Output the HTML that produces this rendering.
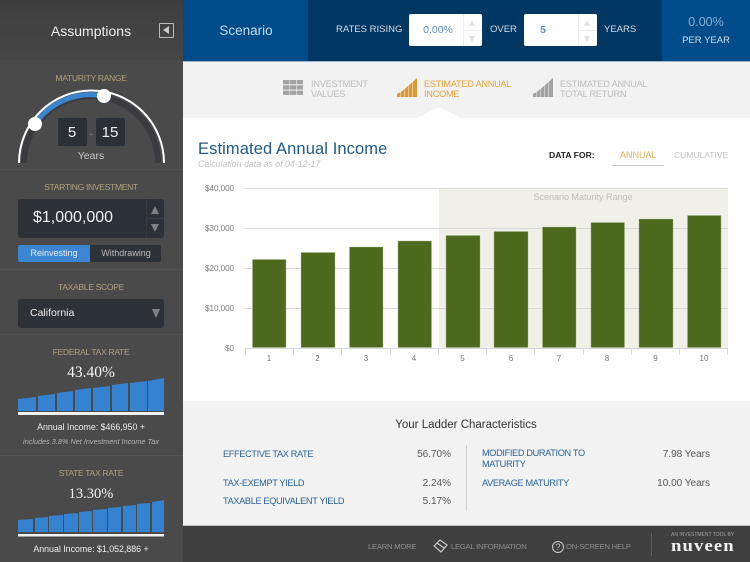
<!DOCTYPE html>
<html><head><meta charset="utf-8">
<style>
html,body{margin:0;padding:0}
body{width:750px;height:562px;overflow:hidden;position:relative;background:#fff;font-family:"Liberation Sans",sans-serif}
.a{position:absolute}
.t{position:absolute;white-space:nowrap;line-height:1}
.c{transform:translateX(-50%)}
.r{transform:translateX(-100%)}
.lab{color:#b0a07a;font-size:8.6px;letter-spacing:-.35px}
.line{position:absolute;height:1px;left:0;width:183px;background:#535354}
.blue{color:#2a6196;font-size:9.2px;letter-spacing:-.35px}
.val{color:#555;font-size:10px}
.ax{font-size:8px;color:#777}
.tk{font-size:8px;color:#777}
.ft{font-size:7.6px;color:#8f8f8f;letter-spacing:-.2px}
.tab{font-size:9.2px;line-height:10px;letter-spacing:-.25px}
</style></head><body>

<!-- sidebar -->
<div class="a" style="left:0;top:0;width:183px;height:562px;background:#4a4a4b"></div>
<div class="a" style="left:0;top:0;width:183px;height:60px;background:linear-gradient(#3e3e3f,#464647)"></div>
<div class="t c" style="left:91px;top:24px;font-size:14px;color:#eee">Assumptions</div>
<div class="a" style="left:159px;top:23px;width:13px;height:13px;border:1px solid #bbb;border-radius:1px"></div>
<div class="a" style="left:163px;top:26px;width:0;height:0;border-right:6px solid #ccc;border-top:4px solid transparent;border-bottom:4px solid transparent"></div>

<div class="t c lab" style="left:91px;top:74px">MATURITY RANGE</div>
<svg class="a" style="left:0;top:80px" width="183" height="90" viewBox="0 80 183 90">
<path d="M24 163A67 67 0 0 1 158 163" fill="none" stroke="#3a3b3e" stroke-width="6"/>
<path d="M19 163A72.500 72.500 0 0 1 164 163" fill="none" stroke="#fff" stroke-width="2"/>
<path d="M35 124A68 68 0 0 1 104 96" fill="none" stroke="#3a85d0" stroke-width="5"/>
<circle cx="35" cy="124" r="7" fill="#fff"/>
<circle cx="104" cy="96" r="7" fill="#fff"/>
</svg>
<div class="a" style="left:58px;top:118px;width:29px;height:28px;background:#2b2f36;border-radius:2px"></div>
<div class="a" style="left:96px;top:118px;width:29px;height:28px;background:#2b2f36;border-radius:2px"></div>
<div class="t c" style="left:72px;top:125px;font-size:15px;color:#eee">5</div>
<div class="t c" style="left:110px;top:125px;font-size:15px;color:#eee">15</div>
<div class="t c" style="left:91px;top:130px;font-size:9px;color:#888">-</div>
<div class="t c" style="left:91px;top:151px;font-size:10.5px;color:#c8c8c8">Years</div>
<div class="line" style="top:169px"></div>

<div class="t c lab" style="left:91px;top:183px">STARTING INVESTMENT</div>
<div class="a" style="left:18px;top:199px;width:146px;height:39px;background:#2d3138;border-radius:3px"></div>
<div class="a" style="left:146px;top:199px;width:1px;height:39px;background:#373b42"></div>
<div class="a" style="left:147px;top:218px;width:17px;height:1px;background:#3b3f46"></div>
<div class="t" style="left:33px;top:210px;font-size:16px;color:#f2f2f2">$1,000,000</div>
<div class="a" style="left:151px;top:206px;width:0;height:0;border-bottom:8px solid #7f8185;border-left:4.5px solid transparent;border-right:4.5px solid transparent"></div>
<div class="a" style="left:151px;top:224px;width:0;height:0;border-top:8px solid #7f8185;border-left:4.5px solid transparent;border-right:4.5px solid transparent"></div>
<div class="a" style="left:18px;top:245px;width:143px;height:17px;background:#2d3138;border-radius:2px"></div>
<div class="a" style="left:18px;top:245px;width:72px;height:17px;background:#3b86d2;border-radius:2px 0 0 2px"></div>
<div class="t c" style="left:54px;top:249px;font-size:9px;color:#e8eef5">Reinvesting</div>
<div class="t c" style="left:126px;top:249px;font-size:9px;color:#b9b9b9">Withdrawing</div>
<div class="line" style="top:269px"></div>

<div class="t c lab" style="left:91px;top:283px">TAXABLE SCOPE</div>
<div class="a" style="left:18px;top:299px;width:146px;height:29px;background:#2d3138;border-radius:3px"></div>
<div class="t" style="left:30px;top:308px;font-size:10.5px;color:#eee">California</div>
<div class="a" style="left:152px;top:309px;width:0;height:0;border-top:9px solid #7f8185;border-left:4px solid transparent;border-right:4px solid transparent"></div>
<div class="line" style="top:334px"></div>

<div class="t c lab" style="left:91px;top:348px">FEDERAL TAX RATE</div>
<div class="t c" style="left:91px;top:365px;font-size:15.5px;color:#f4f4f4;font-family:'Liberation Serif',serif">43.40%</div>
<svg class="a" style="left:0;top:370px" width="183" height="50" viewBox="0 370 183 50">
<g fill="#3582d0">
<polygon points="18,399 36,397 36,411 18,411"/>
<polygon points="38,396 55,394 55,411 38,411"/>
<polygon points="57,393 73,391 73,411 57,411"/>
<polygon points="75,390 91,388 91,411 75,411"/>
<polygon points="93,388 110,386 110,411 93,411"/>
<polygon points="112,385 128,383 128,411 112,411"/>
<polygon points="130,383 147,381 147,411 130,411"/>
<polygon points="148,381 164,378 164,411 148,411"/>
</g>
<rect x="18" y="412" width="146" height="3" fill="#f2f2f2"/>
</svg>
<div class="t c" style="left:91px;top:423px;font-size:8.8px;color:#eee">Annual Income: $466,950 +</div>
<div class="t c" style="left:91px;top:438px;font-size:7.3px;font-style:italic;color:#b4b4b4">includes 3.8% Net Investment Income Tax</div>
<div class="line" style="top:455px"></div>

<div class="t c lab" style="left:91px;top:469px">STATE TAX RATE</div>
<div class="t c" style="left:91px;top:487px;font-size:14.5px;color:#f4f4f4;font-family:'Liberation Serif',serif">13.30%</div>
<svg class="a" style="left:0;top:495px" width="183" height="45" viewBox="0 495 183 45">
<g fill="#3582d0">
<polygon points="18,520 33,519 33,532 18,532"/>
<polygon points="35,518 48,517 48,532 35,532"/>
<polygon points="49,516 63,515 63,532 49,532"/>
<polygon points="64,514 78,513 78,532 64,532"/>
<polygon points="79,512 92,511 92,532 79,532"/>
<polygon points="93,510 107,509 107,532 93,532"/>
<polygon points="108,508 121,507 121,532 108,532"/>
<polygon points="123,506 136,505 136,532 123,532"/>
<polygon points="137,504 150,503 150,532 137,532"/>
<polygon points="152,502 164,500 164,532 152,532"/>
</g>
<rect x="18" y="534" width="146" height="2.500" fill="#f2f2f2"/>
</svg>
<div class="t c" style="left:91px;top:545px;font-size:8.8px;color:#eee">Annual Income: $1,052,886 +</div>

<!-- top bar -->
<div class="a" style="left:183px;top:0;width:567px;height:61px;background:#003763"></div>
<div class="a" style="left:183px;top:0;width:125px;height:61px;background:#004b8a"></div>
<div class="a" style="left:662px;top:0;width:88px;height:61px;background:#004b8a"></div>
<div class="a" style="left:183px;top:61px;width:567px;height:1px;background:#9bb4cc"></div>
<div class="t c" style="left:246px;top:24px;font-size:13.5px;color:#c6dcef">Scenario</div>
<div class="t" style="left:336px;top:24.500px;font-size:9.5px;color:#d5dde5">RATES RISING</div>
<div class="a" style="left:409px;top:14px;width:73px;height:32px;background:#fff;border-radius:2px"></div>
<div class="a" style="left:463px;top:14px;width:1px;height:32px;background:#eee"></div>
<div class="a" style="left:464px;top:30px;width:18px;height:1px;background:#eee"></div>
<div class="a" style="left:469px;top:20px;width:0;height:0;border-bottom:6px solid #e2e2e2;border-left:3.5px solid transparent;border-right:3.5px solid transparent"></div>
<div class="a" style="left:469px;top:36px;width:0;height:0;border-top:6px solid #e2e2e2;border-left:3.5px solid transparent;border-right:3.5px solid transparent"></div>
<div class="t c" style="left:438px;top:25px;font-size:10.5px;color:#5f8fc2">0.00%</div>
<div class="t" style="left:490px;top:24.500px;font-size:9.5px;color:#d5dde5">OVER</div>
<div class="a" style="left:524px;top:14px;width:73px;height:32px;background:#fff;border-radius:2px"></div>
<div class="a" style="left:578px;top:14px;width:1px;height:32px;background:#eee"></div>
<div class="a" style="left:579px;top:30px;width:18px;height:1px;background:#eee"></div>
<div class="a" style="left:584px;top:20px;width:0;height:0;border-bottom:6px solid #e2e2e2;border-left:3.5px solid transparent;border-right:3.5px solid transparent"></div>
<div class="a" style="left:584px;top:36px;width:0;height:0;border-top:6px solid #e2e2e2;border-left:3.5px solid transparent;border-right:3.5px solid transparent"></div>
<div class="t c" style="left:543px;top:25px;font-size:10.5px;font-weight:bold;color:#5f8fc2">5</div>
<div class="t" style="left:604px;top:24.500px;font-size:9.5px;color:#d5dde5">YEARS</div>
<div class="t c" style="left:706px;top:16px;font-size:12.5px;color:#7fb2de">0.00%</div>
<div class="t c" style="left:706px;top:35.500px;font-size:9.5px;color:#d5dde5">PER YEAR</div>

<!-- tabs -->
<div class="a" style="left:183px;top:62px;width:567px;height:56px;background:#f2f2f2"></div>
<svg class="a" style="left:415px;top:105px" width="50" height="14"><polygon points="2,13 24,2 46,13" fill="#fff"/></svg>
<svg class="a" style="left:283px;top:80px" width="20" height="15"><g fill="#a3a3a3">
<rect x="0" y="0" width="6.300" height="4.300"/><rect x="6.800" y="0" width="6.300" height="4.300"/><rect x="13.700" y="0" width="6.300" height="4.300"/>
<rect x="0" y="5.300" width="6.300" height="4.300"/><rect x="6.800" y="5.300" width="6.300" height="4.300"/><rect x="13.700" y="5.300" width="6.300" height="4.300"/>
<rect x="0" y="10.600" width="6.300" height="4.300"/><rect x="6.800" y="10.600" width="6.300" height="4.300"/><rect x="13.700" y="10.600" width="6.300" height="4.300"/></g></svg>
<div class="t tab" style="left:311px;top:79px;color:#bdbdbd">INVESTMENT<br>VALUES</div>
<svg class="a" style="left:397px;top:78px" width="20" height="20"><g fill="#dd9a34">
<polygon points="0,16 3.500,14 3.500,19 0,19"/><polygon points="4,13.700 7.500,11 7.500,19 4,19"/><polygon points="8,10.500 11.500,7.500 11.500,19 8,19"/><polygon points="12,7 15.500,4 15.500,19 12,19"/><polygon points="16,3.500 20,0 20,19 16,19"/></g></svg>
<div class="t tab" style="left:424px;top:79px;color:#e1a341">ESTIMATED ANNUAL<br>INCOME</div>
<svg class="a" style="left:533px;top:78px" width="20" height="20"><g fill="#a3a3a3">
<polygon points="0,16 3.500,14 3.500,19 0,19"/><polygon points="4,13.700 7.500,11 7.500,19 4,19"/><polygon points="8,10.500 11.500,7.500 11.500,19 8,19"/><polygon points="12,7 15.500,4 15.500,19 12,19"/><polygon points="16,3.500 20,0 20,19 16,19"/></g></svg>
<div class="t tab" style="left:560px;top:79px;color:#bdbdbd">ESTIMATED ANNUAL<br>TOTAL RETURN</div>

<!-- chart header -->
<div class="t" style="left:198px;top:141px;font-size:16.5px;color:#1f5a88;letter-spacing:.1px">Estimated Annual Income</div>
<div class="t" style="left:198px;top:160px;font-size:8.8px;font-style:italic;color:#c0c0c0">Calculation data as of 04-12-17</div>
<div class="t" style="left:549px;top:151px;font-size:8.6px;font-weight:bold;color:#222">DATA FOR:</div>
<div class="t" style="left:620px;top:151px;font-size:9px;color:#e5ae55">ANNUAL</div>
<div class="a" style="left:612px;top:165px;width:52px;height:1px;background:#c9c9c9"></div>
<div class="t" style="left:674px;top:151px;font-size:8.5px;color:#c0c0c0">CUMULATIVE</div>

<!-- chart -->
<svg class="a" style="left:183px;top:180px" width="567" height="190" viewBox="183 180 567 190">
<rect x="439" y="188" width="289" height="160" fill="#f0f0e8"/>
<g stroke="#d8d8d8" stroke-width="1">
<path d="M245 188.500H728M245 228.500H728M245 268.500H728M245 308.500H728"/>
</g>
<g stroke="#d6d6e2" stroke-width="1">
<path d="M245 348.500H728M245.500 348V355M293.500 348V355M341.500 348V355M390.500 348V355M438.500 348V355M486.500 348V355M534.500 348V355M583.500 348V355M631.500 348V355M679.500 348V355M727.500 348V355"/>
</g>
<g fill="#4c691e" stroke="#a7b58b" stroke-width=".4">
<rect x="252.500" y="259.500" width="33.500" height="88"/>
<rect x="301" y="252.500" width="34" height="95"/>
<rect x="349.500" y="247" width="33.500" height="100.500"/>
<rect x="398" y="241" width="33.500" height="106.500"/>
<rect x="446" y="235.500" width="34" height="112"/>
<rect x="494" y="231.500" width="34" height="116"/>
<rect x="542.500" y="227" width="33.500" height="120.500"/>
<rect x="591" y="222.500" width="33.500" height="125"/>
<rect x="639" y="219" width="34" height="128.500"/>
<rect x="687.500" y="215.500" width="33.500" height="132"/>
</g>
</svg>
<div class="t c" style="left:583px;top:192.500px;font-size:9px;color:#bdbdb5">Scenario Maturity Range</div>
<div class="t r ax" style="left:234px;top:185px">$40,000</div>
<div class="t r ax" style="left:234px;top:225px">$30,000</div>
<div class="t r ax" style="left:234px;top:265px">$20,000</div>
<div class="t r ax" style="left:234px;top:305px">$10,000</div>
<div class="t r ax" style="left:234px;top:345px">$0</div>
<div class="t c tk" style="left:269px;top:355px">1</div>
<div class="t c tk" style="left:317.500px;top:355px">2</div>
<div class="t c tk" style="left:366px;top:355px">3</div>
<div class="t c tk" style="left:414px;top:355px">4</div>
<div class="t c tk" style="left:462.500px;top:355px">5</div>
<div class="t c tk" style="left:511px;top:355px">6</div>
<div class="t c tk" style="left:559px;top:355px">7</div>
<div class="t c tk" style="left:607px;top:355px">8</div>
<div class="t c tk" style="left:655.500px;top:355px">9</div>
<div class="t c tk" style="left:704px;top:355px">10</div>

<!-- characteristics -->
<div class="a" style="left:183px;top:401px;width:567px;height:125px;background:#f2f2f2"></div>
<div class="t c" style="left:466px;top:420px;font-size:11.5px;color:#333">Your Ladder Characteristics</div>
<div class="t blue" style="left:223px;top:449.500px">EFFECTIVE TAX RATE</div>
<div class="t val r" style="left:451px;top:449.500px">56.70%</div>
<div class="t blue" style="left:223px;top:478.500px">TAX-EXEMPT YIELD</div>
<div class="t val r" style="left:451px;top:478.500px">2.24%</div>
<div class="t blue" style="left:223px;top:497px">TAXABLE EQUIVALENT YIELD</div>
<div class="t val r" style="left:451px;top:496.500px">5.17%</div>
<div class="a" style="left:466px;top:445px;width:1px;height:66px;background:#d0d0d0"></div>
<div class="t blue" style="left:482px;top:448px;line-height:11px">MODIFIED DURATION TO<br>MATURITY</div>
<div class="t val r" style="left:710px;top:449.500px">7.98 Years</div>
<div class="t blue" style="left:482px;top:478.500px">AVERAGE MATURITY</div>
<div class="t val r" style="left:710px;top:478.500px">10.00 Years</div>

<!-- footer -->
<div class="a" style="left:183px;top:525px;width:567px;height:1px;background:#c8c8c8"></div>
<div class="a" style="left:183px;top:526px;width:567px;height:36px;background:#3f3f40"></div>
<div class="t ft" style="left:368px;top:543px">LEARN MORE</div>
<svg class="a" style="left:433px;top:539px" width="15" height="14"><path d="M1 7L7 1L14 6L8 13Z M4 4L11 9" fill="none" stroke="#c8c8c8" stroke-width="1.200"/></svg>
<div class="t ft" style="left:451px;top:543px">LEGAL INFORMATION</div>
<svg class="a" style="left:551px;top:540px" width="14" height="14"><circle cx="7" cy="7" r="5.500" fill="none" stroke="#c8c8c8" stroke-width="1"/><text x="7" y="10" font-size="9" text-anchor="middle" fill="#c8c8c8" font-family="Liberation Sans">?</text></svg>
<div class="t ft" style="left:566px;top:543px">ON-SCREEN HELP</div>
<div class="a" style="left:651px;top:533px;width:1px;height:23px;background:#5f5f5f"></div>
<div class="t" style="left:671px;top:532.500px;font-size:5px;color:#a0a0a0">AN INVESTMENT TOOL BY</div>
<div class="t" style="left:671px;top:537px;font-size:17px;font-weight:bold;color:#f0f0f0;font-family:'Liberation Serif',serif;letter-spacing:1px;transform:scaleX(1.1);transform-origin:left">nuveen</div>
</body></html>
